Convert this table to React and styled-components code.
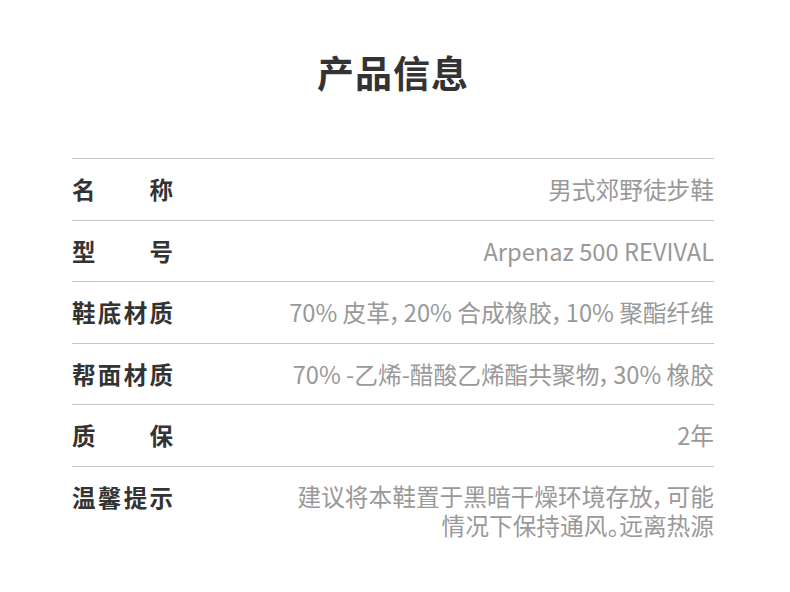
import React from "react";
import styled, { createGlobalStyle } from "styled-components";

const Global = createGlobalStyle`
  html, body { margin: 0; padding: 0; background: #fff; }
  body { font-family: "Noto Sans CJK SC", "Noto Sans", sans-serif; }
`;

const Page = styled.div`
  width: 642px;
  margin-left: 72px;
  padding-top: 47px;
`;

const Title = styled.h1`
  margin: 0 0 61px;
  font-size: 37px;
  line-height: 50px;
  font-weight: 700;
  color: #333;
  text-align: center;
  letter-spacing: 1px;
`;

const Table = styled.div`
  display: flex;
  flex-direction: column;
`;

const Row = styled.div`
  display: flex;
  align-items: flex-start;
  justify-content: space-between;
  border-top: 1px solid #c4c4c4;
  padding: 15px 0 ${(p) => (p.$last ? "0" : "14.6px")};
`;

const Label = styled.div`
  width: 101px;
  flex: none;
  font-size: 23.5px;
  line-height: 31px;
  font-weight: 700;
  color: #333;
  text-align: justify;
  text-align-last: justify;
`;

const Value = styled.div`
  font-size: 23.7px;
  line-height: ${(p) => (p.$multi ? "29px" : "31px")};
  font-weight: 400;
  color: #999;
  text-align: right;
  white-space: pre-line;
  font-feature-settings: "palt";
`;

const Comma = styled.span`
  margin-right: 2px;
`;

const withCommas = (text) =>
  text.split("，").flatMap((part, i, arr) =>
    i < arr.length - 1 ? [part, <Comma key={i}>，</Comma>] : [part]
  );

const rows = [
  ["名称", "男式郊野徒步鞋"],
  ["型号", "Arpenaz 500 REVIVAL"],
  ["鞋底材质", "70% 皮革，20% 合成橡胶，10% 聚酯纤维"],
  ["帮面材质", "70% -乙烯-醋酸乙烯酯共聚物，30% 橡胶"],
  ["质保", "2年"],
];

export default function App() {
  return (
    <>
      <Global />
      <Page>
        <Title>产品信息</Title>
        <Table>
          {rows.map(([l, v]) => (
            <Row key={l}>
              <Label>{l}</Label>
              <Value>{withCommas(v)}</Value>
            </Row>
          ))}
          <Row $last>
            <Label>温馨提示</Label>
            <Value $multi>
              {withCommas("建议将本鞋置于黑暗干燥环境存放，可能\n情况下保持通风。远离热源")}
            </Value>
          </Row>
        </Table>
      </Page>
    </>
  );
}
